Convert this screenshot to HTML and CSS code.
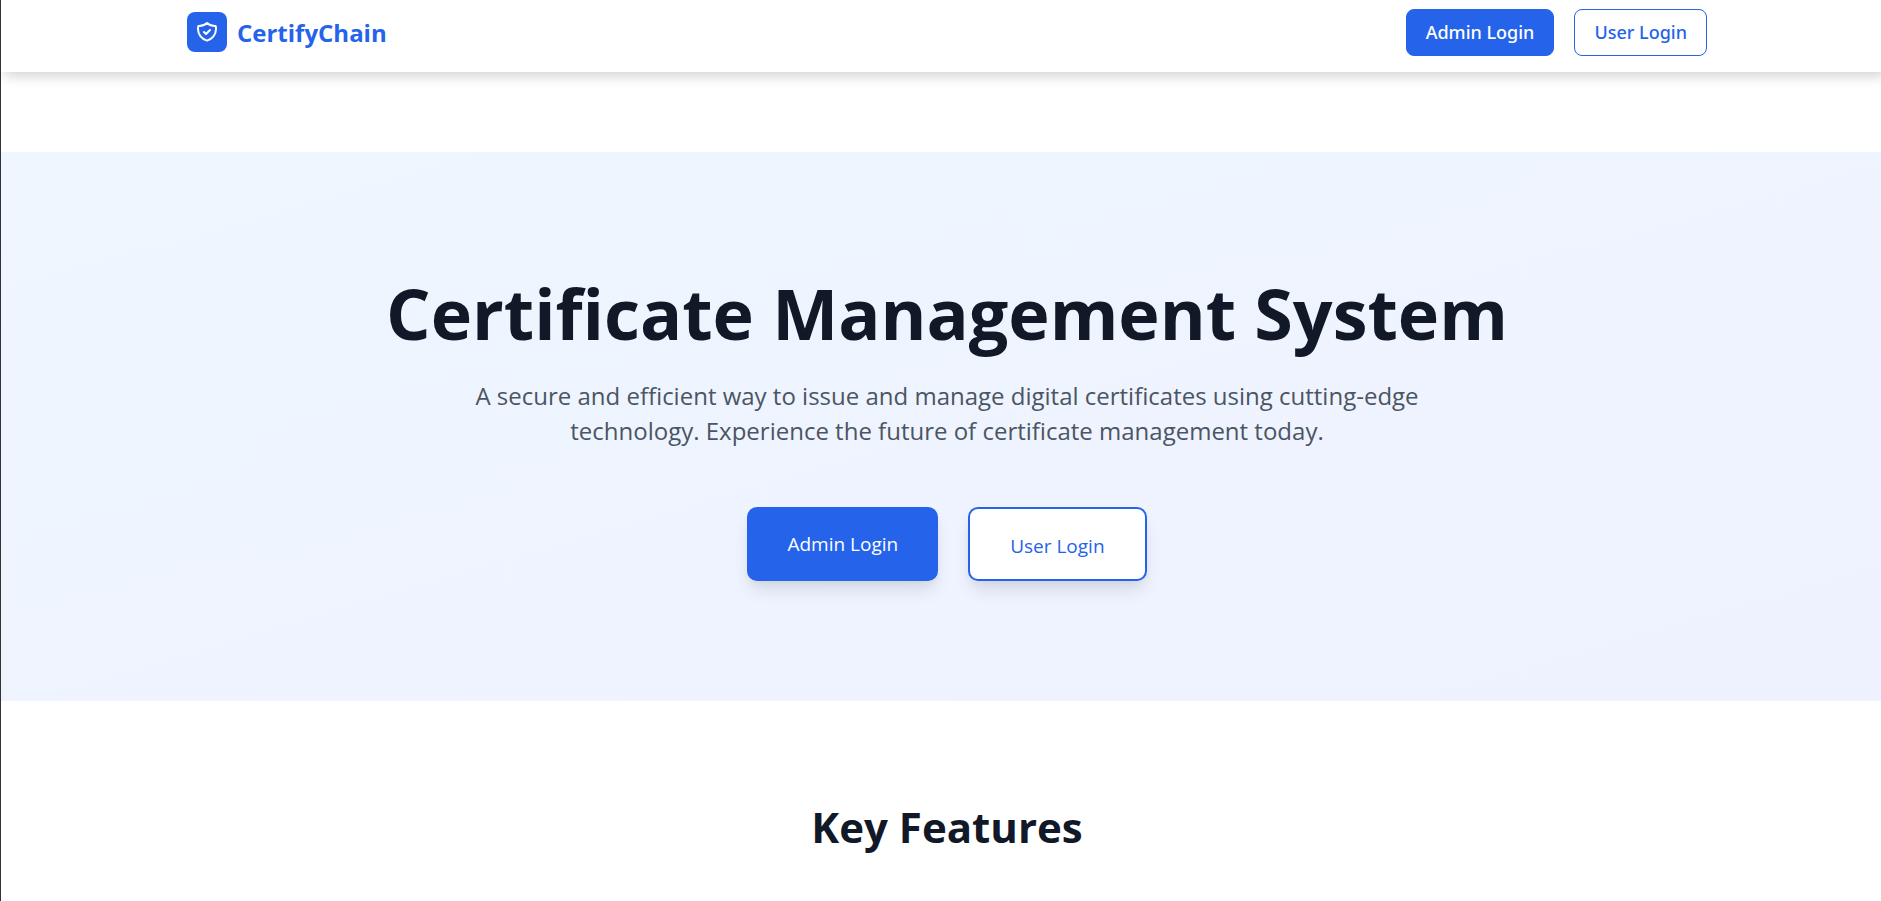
FILE: index.html
```html
<!DOCTYPE html>
<html lang="en">
<head>
<meta charset="utf-8">
<title>CertifyChain</title>
<link rel="stylesheet" href="styles.css">
</head>
<body>
<header class="header">
  <div class="container">
    <a class="brand" href="#">
      <span class="logo">
        <svg width="24" height="24" viewBox="0 0 24 24" fill="none" stroke="currentColor" stroke-width="2" stroke-linecap="round" stroke-linejoin="round" aria-hidden="true"><path d="M9 12l2 2 4-4m5.618-4.016A11.955 11.955 0 0112 2.944a11.955 11.955 0 01-8.618 3.040A12.02 12.02 0 003 9c0 5.591 3.824 10.290 9 11.622 5.176-1.332 9-6.030 9-11.622 0-1.042-.133-2.052-.382-3.016z"/></svg>
      </span>
      <span>CertifyChain</span>
    </a>
    <nav class="nav">
      <a class="button primary" href="#">Admin Login</a>
      <a class="button outline" href="#">User Login</a>
    </nav>
  </div>
</header>
<main>
  <section class="hero">
    <h1>Certificate Management System</h1>
    <p>A secure and efficient way to issue and manage digital certificates using cutting-edge technology. Experience the future of certificate management today.</p>
    <div class="actions">
      <a class="button large primary" href="#">Admin Login</a>
      <a class="button large outline" href="#">User Login</a>
    </div>
  </section>
  <section class="features">
    <h2>Key Features</h2>
  </section>
</main>
</body>
</html>
```
FILE: styles.css
```css
* { box-sizing: border-box; }
body {
  margin: 0;
  min-height: 100vh;
  border-left: 1px solid #333;
  background: #fff;
  color: #111827;
  font-family: "Open Sans", "Noto Sans", sans-serif;
}
a { text-decoration: none; }
h1, h2, p { margin: 0; }
.header {
  height: 72px;
  padding: 0 0 8px 12px;
  box-shadow: 4px 4px 12px rgba(0, 0, 0, 0.18);
  display: flex;
  justify-content: center;
}
.container {
  width: 100%;
  max-width: 1520px;
  display: flex;
  align-items: center;
  justify-content: space-between;
}
.brand {
  display: flex;
  align-items: center;
  gap: 10px;
  color: #2563eb;
  font-size: 24px;
  font-weight: 700;
}
.logo {
  display: flex;
  align-items: center;
  justify-content: center;
  width: 40px;
  height: 40px;
  border-radius: 8px;
  background: #2563eb;
  color: #fff;
}
.nav { display: flex; gap: 20px; }
.button {
  display: flex;
  align-items: center;
  padding: 0 19px;
  height: 47px;
  border: 1px solid #2563eb;
  border-radius: 8px;
  font-family: "Noto Sans", sans-serif;
  font-size: 18px;
  font-weight: 500;
}
.primary { background: #2563eb; color: #fff; }
.outline { background: #fff; color: #2563eb; }
.hero {
  margin-top: 80px;
  padding: 116px 0 120px 12px;
  background: linear-gradient(to bottom right, #eff6ff, #eef2ff);
  text-align: center;
}
.hero h1 { font-size: 70px; line-height: 90px; }
.hero p {
  max-width: 1000px;
  margin: 20px auto 0;
  color: #4b5563;
  font-size: 24px;
  line-height: 35px;
}
.actions {
  display: flex;
  justify-content: center;
  gap: 30px;
  margin-top: 59px;
}
.large {
  height: 74px;
  padding: 0 38px;
  border-width: 2px;
  border-radius: 10px;
  font-family: "Open Sans", sans-serif;
  font-size: 19px;
  font-weight: 400;
  box-shadow: 0 12px 18px -3px rgba(0, 0, 0, 0.1), 0 4px 8px -2px rgba(0, 0, 0, 0.05);
}
.large.outline { padding: 4px 40px 0; }
.features { padding: 96px 0 40px 12px; text-align: center; }
.features h2 { font-size: 42px; line-height: 60px; }
```
